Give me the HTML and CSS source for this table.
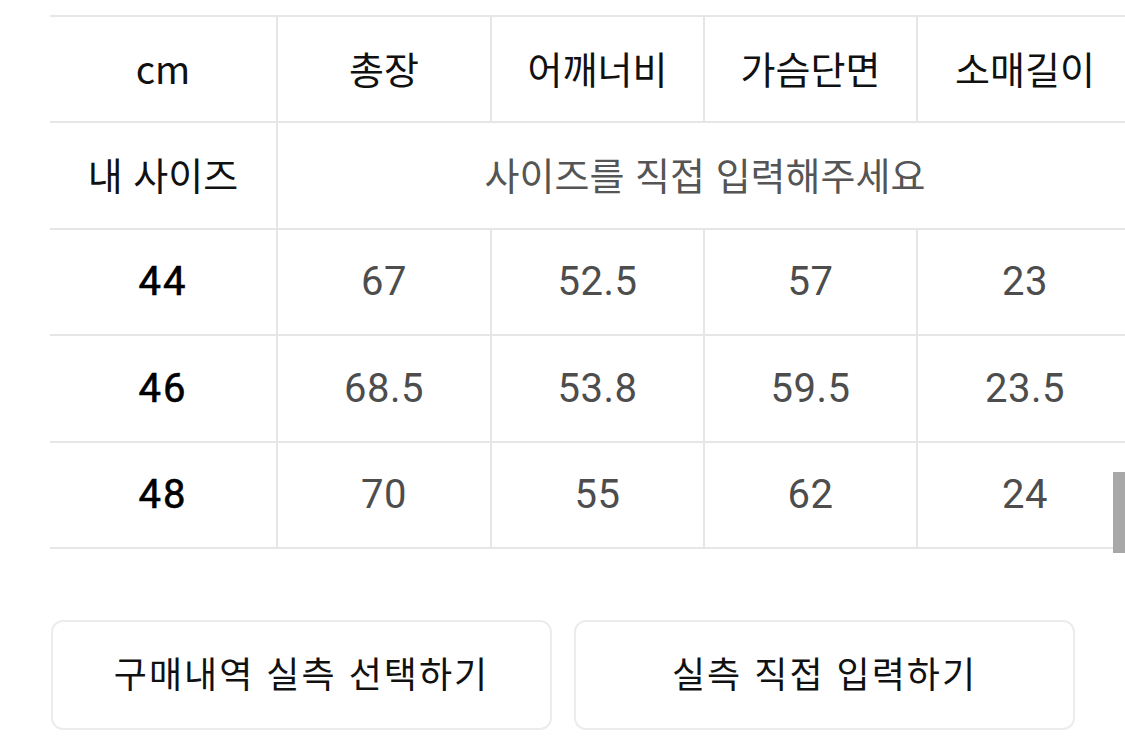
FILE: index.html
```html
<!DOCTYPE html>
<html lang="ko">
<head>
<meta charset="utf-8">
<link rel="stylesheet" href="styles.css">
</head>
<body>
<div class="page">
  <div class="table">
    <div class="row">
      <div class="cell head">cm</div>
      <div class="cell head">총장</div>
      <div class="cell head">어깨너비</div>
      <div class="cell head">가슴단면</div>
      <div class="cell head">소매길이</div>
    </div>
    <div class="row">
      <div class="cell head">내 사이즈</div>
      <div class="cell span muted">사이즈를 직접 입력해주세요</div>
    </div>
    <div class="row">
      <div class="cell size">44</div>
      <div class="cell val">67</div>
      <div class="cell val">52.5</div>
      <div class="cell val">57</div>
      <div class="cell val">23</div>
    </div>
    <div class="row">
      <div class="cell size">46</div>
      <div class="cell val">68.5</div>
      <div class="cell val">53.8</div>
      <div class="cell val">59.5</div>
      <div class="cell val">23.5</div>
    </div>
    <div class="row">
      <div class="cell size">48</div>
      <div class="cell val">70</div>
      <div class="cell val">55</div>
      <div class="cell val">62</div>
      <div class="cell val">24</div>
    </div>
  </div>
  <div class="actions">
    <button class="btn">구매내역 실측 선택하기</button>
    <button class="btn">실측 직접 입력하기</button>
  </div>
  <div class="scrollbar"></div>
</div>
</body>
</html>
```
FILE: styles.css
```css
html, body {
  margin: 0;
  padding: 0;
  background: #ffffff;
  overflow: hidden;
}
body {
  width: 1125px;
  height: 744px;
  font-family: "Noto Sans CJK KR", Roboto, sans-serif;
  color: #111;
}
.page {
  position: relative;
  width: 1125px;
  height: 744px;
  overflow: hidden;
  padding-top: 15px;
  box-sizing: border-box;
}
.table {
  margin-left: 50px;
  width: 1082px;
  border-top: 2px solid #e6e6e6;
}
.row {
  display: grid;
  grid-template-columns: 226px 214px 213px 213px 216px;
  height: 104.4px;
  border-bottom: 2px solid #e6e6e6;
  box-sizing: content-box;
}
.cell {
  display: flex;
  align-items: center;
  justify-content: center;
  border-left: 2px solid #e6e6e6;
  font-size: 38px;
  padding-bottom: 4px;
  box-sizing: border-box;
}
.cell:first-child {
  border-left: none;
}
.head {
  color: #111;
}
.span {
  grid-column: 2 / 6;
}
.muted {
  color: #555;
  font-size: 38px;
}
.size {
  font-family: Roboto, "Noto Sans CJK KR", sans-serif;
  font-weight: 400;
  font-size: 40px;
  letter-spacing: 2px;
  color: #000;
  -webkit-text-stroke: 0.6px #000;
  padding-bottom: 0;
}
.val {
  font-family: Roboto, "Noto Sans CJK KR", sans-serif;
  font-size: 40px;
  letter-spacing: 0.5px;
  color: #4d4d4d;
  padding-bottom: 0;
}
.actions {
  display: flex;
  gap: 22px;
  margin-left: 51px;
  margin-top: 71px;
}
.btn {
  width: 501px;
  height: 110px;
  background: #fff;
  border: 2px solid #ececec;
  border-radius: 12px;
  font-family: "Noto Sans CJK KR", sans-serif;
  font-size: 36px;
  letter-spacing: 2px;
  color: #111;
  padding: 0 0 6px;
}
.scrollbar {
  position: absolute;
  right: 0;
  top: 472px;
  width: 12px;
  height: 81px;
  background: #a8a8a8;
}
```
